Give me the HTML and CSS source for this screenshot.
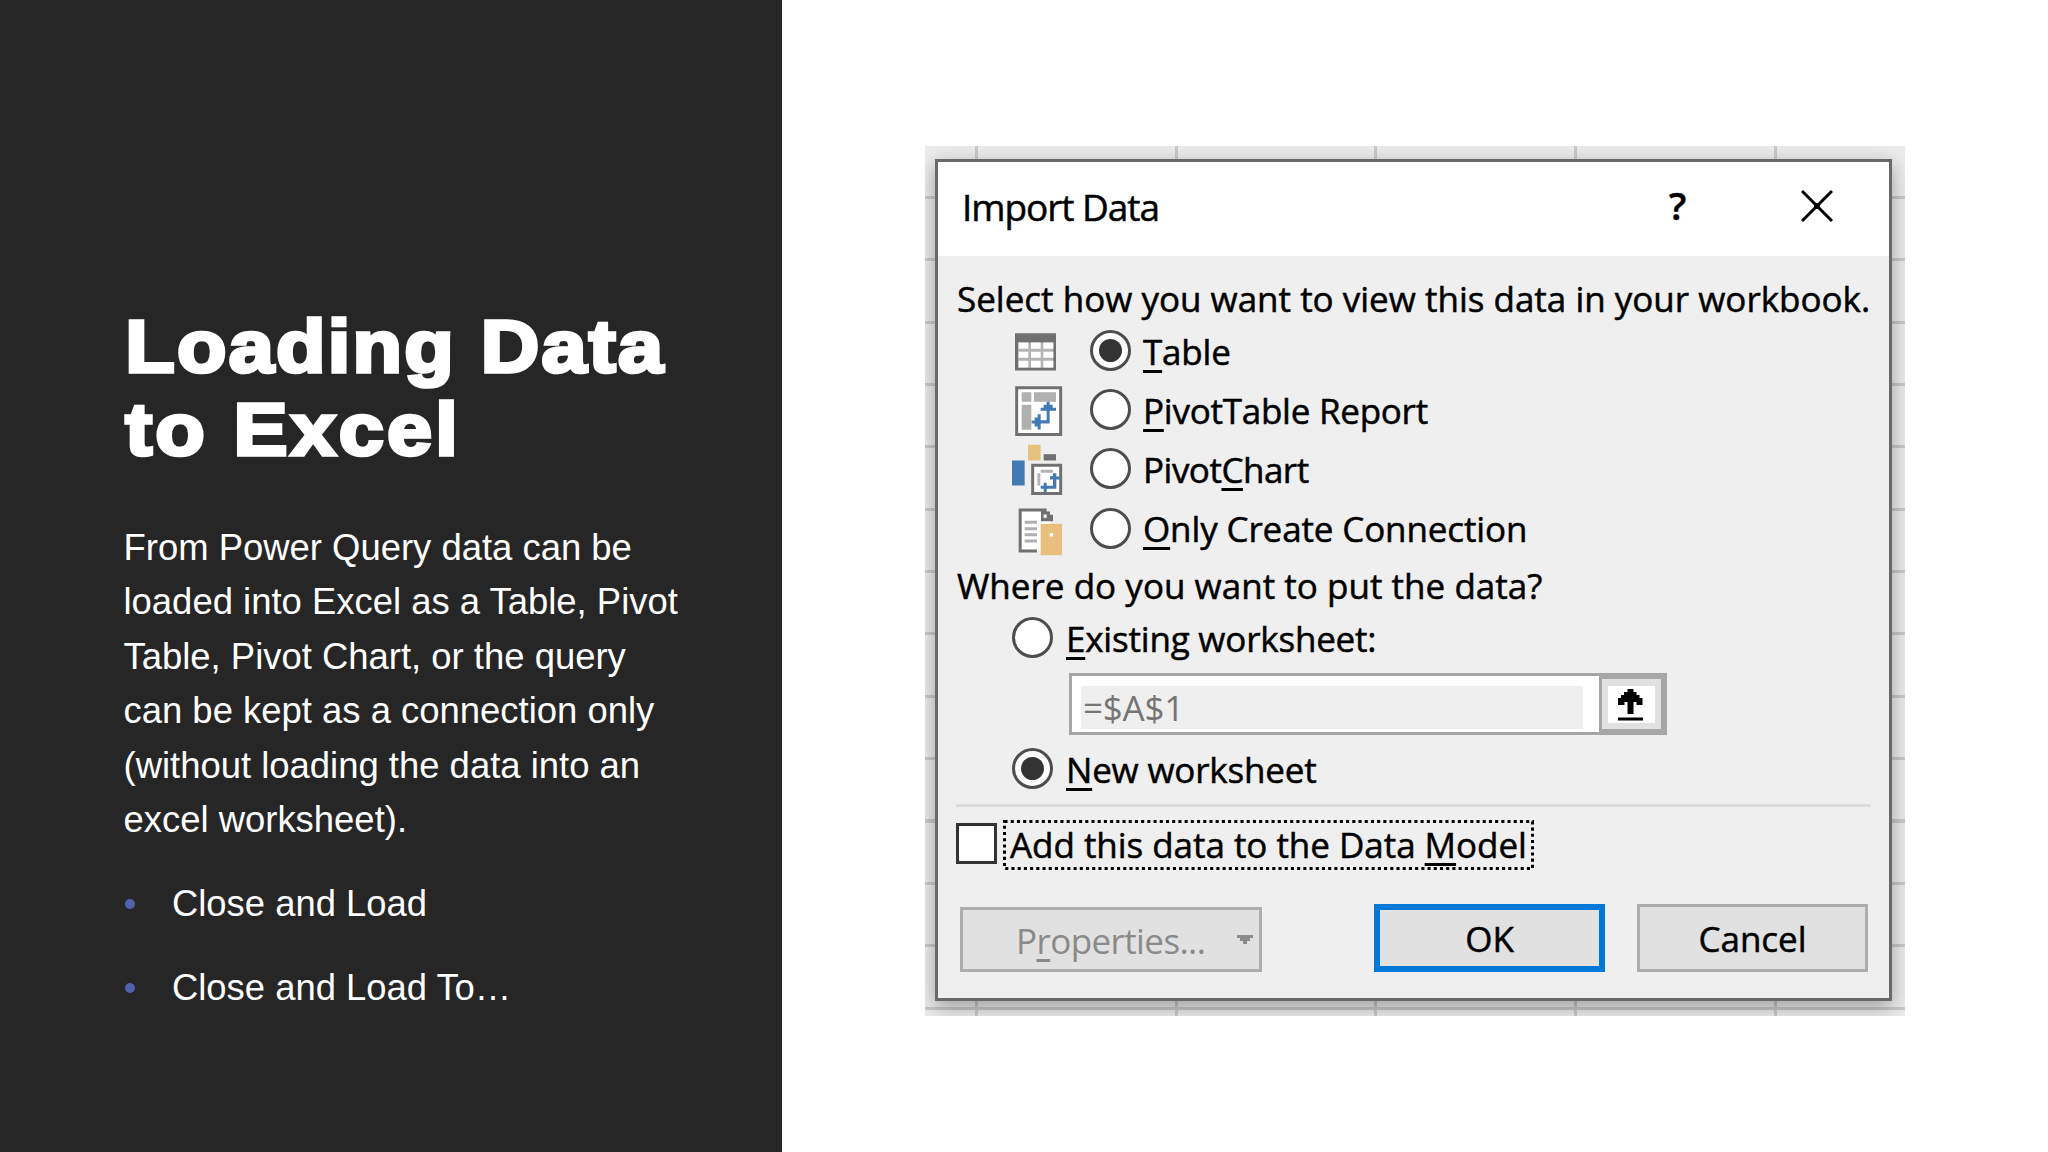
FILE: index.html
```html
<!DOCTYPE html>
<html lang="en">
<head>
<meta charset="utf-8">
<title>Loading Data to Excel</title>
<link rel="stylesheet" href="styles.css">
</head>
<body>
<main class="slide">
  <section class="panel">
    <h1>Loading Data<br><span class="second-line">to Excel</span></h1>
    <p>From Power Query data can be<br>loaded into Excel as a Table, Pivot<br>Table, Pivot Chart, or the query<br>can be kept as a connection only<br>(without loading the data into an<br>excel worksheet).</p>
    <ul>
      <li>Close and Load</li>
      <li>Close and Load To…</li>
    </ul>
  </section>
  <section class="stage">
    <div class="sheet">
      <div class="dialog">
        <header class="titlebar">
          <span class="title">Import Data</span>
          <span class="help">?</span>
          <svg class="close" viewBox="0 0 32 32" width="32" height="32"><path d="M1 1L31 31M31 1L1 31" stroke="#000" stroke-width="3" fill="none"/><path d="M13 13h6v6h-6z"/></svg>
        </header>
        <div class="body">
          <div class="line q1">Select how you want to view this data in your workbook.</div>
          <div class="option">
            <svg class="icon" viewBox="90 3.500 162 177">
              <path fill="#707070" d="M105 40H228V152H105z"/><path fill="#b4b4b4" d="M114 68H220V144H114z"/>
              <path fill="#fff" d="M116 68h29v19h-29zM153 68h29v19h-29zM190 68h30v19h-30zM116 96h29v18h-29zM153 96h29v18h-29zM190 96h30v18h-30zM116 123h29v20h-29zM153 123h29v20h-29zM190 123h30v20h-30z"/>
            </svg>
            <i class="radio on"></i><span class="label o1"><u>T</u>able</span>
          </div>
          <div class="option">
            <svg class="icon" viewBox="90 180.500 162 177">
              <path fill="#fff" stroke="#707070" stroke-width="9" d="M110 204H242V344H110z"/>
              <path fill="#b0b0b0" d="M125 217h29v29h-29zM162 217h66v29h-66zM125 255h29v75h-29z"/>
              <path fill="#427bb3" d="M200 246h9v9h9v9h10v9h-19v38h-27v18h-9v-9h-9v-9h-9v-9h9v-9h9v-10h9v18h18v-28h-18v-9h9v-9h9z"/>
            </svg>
            <i class="radio"></i><span class="label o2"><u>P</u>ivotTable Report</span>
          </div>
          <div class="option">
            <svg class="icon" viewBox="90 358.500 162 177">
              <path fill="#e8c17d" d="M144 376h38v47h-38z"/><path fill="#427bb3" d="M96 423h38v75H96z"/><path fill="#707070" d="M191 404h37v19h-37z"/>
              <path fill="#fff" stroke="#707070" stroke-width="9" d="M158 437H242V522H158z"/>
              <path fill="#b4b4b4" d="M182 451h37v9h-37zM172 461h9v37h-9z"/>
              <path fill="#427bb3" d="M219 461h10v10h10v9h-10v28h-29v10h-9v-10h-9v-9h9v-9h9v9h19v-19h-9v-10h9z"/>
            </svg>
            <i class="radio"></i><span class="label o3">Pivot<u>C</u>hart</span>
          </div>
          <div class="option">
            <svg class="icon" viewBox="90 535.500 162 177">
              <path fill="#fff" d="M120 568h72l20 34-12 88h-80z"/>
              <path fill="#707070" d="M116 564h84v9h10v10h9v19h-36v-29h-58v114h46v9h-55z"/>
              <path fill="#fff" d="M191 582h9v10h-9z"/>
              <path fill="#b0b0b0" d="M134 601h37v9h-37zM134 620h37v9h-37zM134 638h37v9h-37zM134 657h37v9h-37z"/>
              <path fill="#e8bf7c" d="M182 610h64v94h-64z"/><path fill="#fff" d="M209 638h10v10h-10z"/>
            </svg>
            <i class="radio"></i><span class="label o4"><u>O</u>nly Create Connection</span>
          </div>
          <div class="line q2">Where do you want to put the data?</div>
          <div class="place"><i class="radio"></i><span class="label p1"><u>E</u>xisting worksheet:</span></div>
          <div class="ref">
            <div class="refbox"><span>=$A$1</span></div>
            <div class="refbtn">
              <svg viewBox="0 0 47 37" width="47" height="37"><path fill="#fff" d="M0 0h47v37H0z"/><path d="M19.500 3h6v3h3v3h3v3h3v7h-6v-3h-3v12h-6v-12h-3v3h-6.500v-7h3v-3h3v-3h3.500zM10 31.500h25v3H10z"/></svg>
            </div>
          </div>
          <div class="place second"><i class="radio on"></i><span class="label p2"><u>N</u>ew worksheet</span></div>
          <div class="rule"></div>
          <div class="model">
            <i class="check"></i>
            <div class="focus">
              <svg width="531" height="50"><rect x="1.500" y="1.500" width="528" height="47" fill="none" stroke="#000" stroke-width="3" stroke-dasharray="3.100 3.110"/></svg>
              <span class="label m1">Add this data to the Data <u>M</u>odel</span>
            </div>
          </div>
          <div class="buttons">
            <div class="btn props"><span class="b1">P<u>r</u>operties...</span><svg width="16" height="9" viewBox="0 0 16 9"><path fill="#8c8c8c" d="M0 0h16v3h-3v3h-3v3H6V6H3V3H0z"/></svg></div>
            <div class="btn ok"><span class="b2">OK</span></div>
            <div class="btn cancel"><span class="b3">Cancel</span></div>
          </div>
        </div>
      </div>
    </div>
  </section>
</main>
</body>
</html>
```
FILE: styles.css
```css
* { box-sizing: border-box; }
body { margin: 0; background: #fff; }
.slide { display: flex; width: 2048px; height: 1152px; overflow: hidden; }

.panel {
  width: 782px; height: 1152px; padding: 305px 0 0 123px;
  background: #262626; color: #fff;
  font-family: "Liberation Sans", Arial, sans-serif;
}
h1 {
  margin: 0; font-size: 75px; line-height: 83px; font-weight: 700;
  letter-spacing: 2.1px; white-space: nowrap; padding-left: 2px;
  -webkit-text-stroke: 3.6px #fff;
  transform: scaleX(1.08); transform-origin: left;
}
.second-line { letter-spacing: 2.9px; }
.panel p { margin: 49.5px 0 0 .5px; font-size: 36.45px; line-height: 54.5px; white-space: nowrap; }
.panel ul { list-style: none; margin: 29.5px 0 0; padding: 0; }
.panel li {
  display: flex; align-items: center; height: 54.5px; margin-bottom: 29.7px;
  font-size: 36.4px; line-height: 54.5px; white-space: nowrap;
}
.panel li::before {
  content: ""; width: 10px; height: 10px; margin: 0 37px 0 2px;
  border-radius: 50%; background: #5262ad;
}

.stage { flex: 1; padding: 146px 0 0 143px; }
.sheet {
  width: 980px; height: 870px; padding: 13px 13px 15px 10px; overflow: hidden;
  background:
    repeating-linear-gradient(to right, transparent 0 50px, #c9c9c9 50px 53px, transparent 53px 199.7px),
    repeating-linear-gradient(to bottom, transparent 0 50px, #c9c9c9 50px 53px, transparent 53px 62.35px),
    #ebebeb;
}
.dialog {
  width: 957px; height: 842px; border: 3px solid #696969; background: #efefef;
  box-shadow: 0 6px 18px rgba(0, 0, 0, .33);
  font-family: "Open Sans", "Noto Sans", sans-serif;
  font-size: 35px; line-height: 40px; color: #000; white-space: nowrap;
  -webkit-text-stroke: .5px currentColor;
}
u { text-decoration-thickness: 3px; text-underline-offset: 5px; text-decoration-skip-ink: none; }
.titlebar { display: flex; height: 94px; padding-left: 24px; background: #fff; align-items: flex-start; }
.title { width: 707px; padding-top: 25px; font-size: 37px; letter-spacing: -1.05px; }
.help { width: 132px; padding-top: 23px; font-size: 38px; font-weight: 600; }
.close { margin-top: 28px; }
.body { padding: 22px 18px 0; }
.q1 { height: 43px; padding: 1px 0 0 1px; }
.option { display: flex; align-items: center; height: 59.2px; margin-left: 54px; }
.icon { width: 54px; height: 59px; margin-right: 26px; }
.label { padding-top: 2px; }
.o1 { letter-spacing: -.2px; }
.o2 { letter-spacing: -.25px; }
.o3 { letter-spacing: -.5px; }
.o4 { letter-spacing: -.13px; }
.p1, .p2 { letter-spacing: -.2px; padding-left: 1px; }
.radio {
  display: flex; width: 41px; height: 41px; margin-right: 12px;
  border: 3px solid #4d4d4d; border-radius: 50%; background: #fff;
}
.radio.on::after { content: ""; width: 23px; height: 23px; margin: auto; border-radius: 50%; background: #333; }
.q2 { margin-top: 6px; padding: 2px 0 0 1px; height: 40px; letter-spacing: .03px; }
.place { display: flex; align-items: center; height: 42px; margin: 13px 0 0 56px; }
.ref { display: flex; width: 598px; height: 62px; margin: 14px 0 0 113px; border: 3px solid #a6a6a6; background: #fff; }
.refbox { width: 502px; height: 43px; margin: 10px 16px 0 9px; padding-left: 2px; background: #efefef; color: #757575; line-height: 43px; -webkit-text-stroke: 0; letter-spacing: -.2px; }
.refbtn { width: 65px; height: 56px; padding: 7px 6px; border: 3px solid #a6a6a6; background: #e1e1e1; flex: none; }
.refbtn svg { display: block; }
.place.second { margin-top: 13px; }
.rule { height: 3px; margin-top: 14px; background: #dbdbdb; }
.model { display: flex; margin-top: 13px; align-items: center; height: 50px; }
.check { width: 41px; height: 41px; margin-top: -2px; border: 3px solid #333; background: #fff; }
.focus { position: relative; width: 531px; height: 50px; margin-left: 6px; padding: 5px 0 0 7px; }
.focus svg { position: absolute; left: 0; top: 0; }
.m1 { letter-spacing: -.04px; }
.buttons { display: flex; align-items: flex-end; height: 68px; margin-top: 34px; padding-left: 4px; }
.btn { display: flex; align-items: center; justify-content: center; height: 68px; width: 231px; border: 3px solid #adadad; background: #e1e1e1; }
.props { width: 302px; height: 65px; justify-content: flex-start; padding-left: 53px; color: #8a8a8a; -webkit-text-stroke: 0; }
.b1 { padding-top: 3px; letter-spacing: -.6px; }
.b2, .b3 { padding-top: 2px; }
.props svg { margin-left: auto; margin-right: 6px; }
.ok { margin-left: 112px; border: 6px solid #0078d7; }
.cancel { margin-left: 32px; }
```
